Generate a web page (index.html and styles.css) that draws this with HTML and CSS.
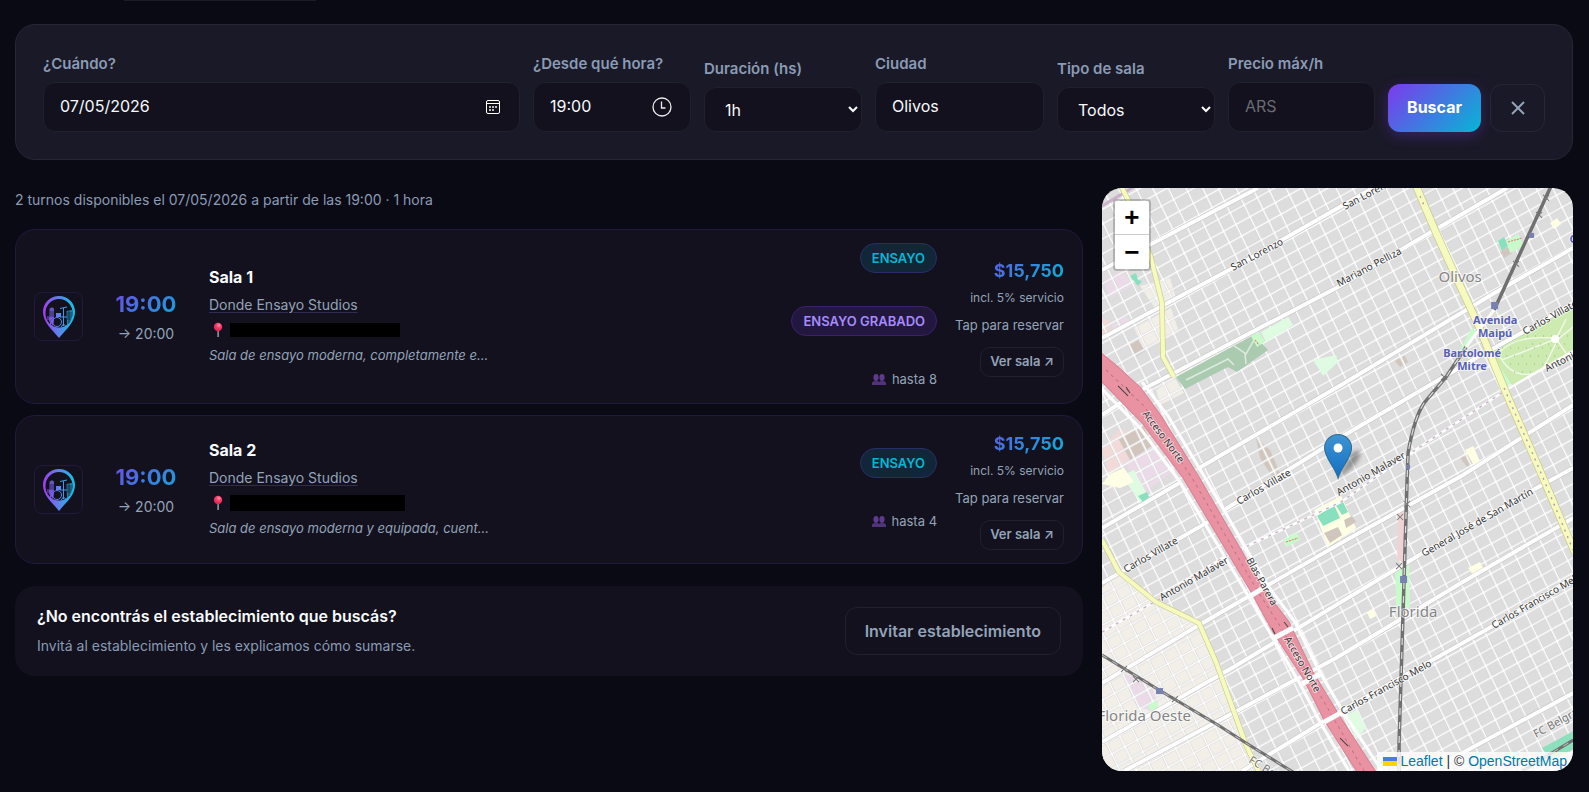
FILE: index.html
```html
<!DOCTYPE html>
<html lang="es">
<head>
  <meta charset="UTF-8">
  <meta name="viewport" content="width=device-width, initial-scale=1">
  <title>Buscar sala de ensayo</title>
  <link rel="stylesheet" href="styles.css">
</head>
<body>

  <!-- shared symbols -->
  <svg class="defs" width="0" height="0" aria-hidden="true">
    <defs>
      <linearGradient id="logoGrad" gradientUnits="userSpaceOnUse" x1="1" y1="0" x2="33" y2="0">
        <stop offset="0" stop-color="#a33cf0"/>
        <stop offset="0.5" stop-color="#5b85ea"/>
        <stop offset="1" stop-color="#10c4e6"/>
      </linearGradient>
      <radialGradient id="pinGrad" cx="0.6" cy="0.3" r="0.7">
        <stop offset="0" stop-color="#ff9ab0"/>
        <stop offset="0.4" stop-color="#f8406c"/>
        <stop offset="1" stop-color="#d81f50"/>
      </radialGradient>
      <symbol id="logo" viewBox="0 0 34 44">
        <path fill="url(#logoGrad)" fill-rule="evenodd" d="M17 1C7.800 1 1 8 1 17c0 10 8.500 17 16 26 7.500-9 16-16 16-26C33 8 26.200 1 17 1zM17 4a13.500 14 0 0 1 13.500 14A13.500 14 0 0 1 17 32.500 13.500 14 0 0 1 3.500 18 13.500 14 0 0 1 17 4z"/>
        <g fill="none" stroke="url(#logoGrad)" stroke-width="1">
          <circle cx="15" cy="27" r="4.500"/>
          <path d="M21.500 13v18M18 13.500l7-1.500M18 22h7M19 32l2.500-3 3 3M5 22h6M5 24h5M10 25l-2 5"/>
        </g>
        <g fill="url(#logoGrad)">
          <path d="M7.500 14c1-2 4-2 4.500 0v12l-1 5-4-5z" opacity="0.800"/>
          <rect x="14" y="18" width="5" height="4"/>
          <path d="M24.500 16l5.500-1v9l-5 6z" opacity="0.700"/>
        </g>
        <path d="M6 17h6M6 19h6M6 21h6M25 18h5M25 20h5M25 22h5M25 24h4M27 16v12" stroke="#12111d" stroke-width="0.600"/>
      </symbol>
      <symbol id="pin" viewBox="0 0 16 16">
        <rect x="7.400" y="7" width="1.400" height="8" fill="#a9a3b5"/>
        <circle cx="8" cy="5" r="4.200" fill="url(#pinGrad)"/>
      </symbol>
      <symbol id="people" viewBox="0 0 14 11">
        <g fill="#5d3a8c">
          <ellipse cx="4" cy="3.500" rx="2.600" ry="3.400"/>
          <ellipse cx="10" cy="3.500" rx="2.600" ry="3.400"/>
          <path d="M0 11V9q0-2 4-2 2 0 3 .7Q8 7 10 7q4 0 4 2v2z" opacity="0.850"/>
        </g>
      </symbol>
    </defs>
  </svg>

  <main class="page">
    <div class="tab-stub"></div>

    <form class="search">
      <div class="field field-date">
        <label for="fecha">¿Cuándo?</label>
        <div class="control">
          <input type="text" id="fecha" value="07/05/2026">
          <svg width="16" height="16" viewBox="0 0 16 16" fill="none" stroke="#fff">
            <rect x="1.500" y="1.500" width="13" height="13" rx="1.500"/>
            <path d="M1.500 4.500h13"/>
            <path d="M4 8h2M7 8h2M10 8h2M4 11h2M7 11h2" stroke="#bbb" stroke-width="2"/>
          </svg>
        </div>
      </div>
      <div class="field field-m">
        <label for="hora">¿Desde qué hora?</label>
        <div class="control">
          <input type="text" id="hora" value="19:00">
          <svg width="20" height="20" viewBox="0 0 20 20" fill="none" stroke="#eee" stroke-width="1.300">
            <circle cx="10" cy="10" r="9"/>
            <path d="M9.500 4.500V11H13.500"/>
          </svg>
        </div>
      </div>
      <div class="field field-m">
        <label for="duracion">Duración (hs)</label>
        <select id="duracion"><option>1h</option><option>2h</option><option>3h</option></select>
      </div>
      <div class="field field-l">
        <label for="ciudad">Ciudad</label>
        <div class="control"><input type="text" id="ciudad" value="Olivos"></div>
      </div>
      <div class="field field-m">
        <label for="tipo">Tipo de sala</label>
        <select id="tipo"><option>Todos</option><option>Ensayo</option><option>Ensayo grabado</option></select>
      </div>
      <div class="field field-s">
        <label for="precio">Precio máx/h</label>
        <div class="control"><input type="text" id="precio" placeholder="ARS"></div>
      </div>
      <div class="actions">
        <button type="submit" class="btn btn-primary">Buscar</button>
        <button type="reset" class="btn btn-clear" aria-label="Limpiar">
          <svg width="14" height="14" viewBox="0 0 14 14" stroke="currentColor" stroke-width="2"><path d="M1 1l12 12M13 1L1 13"/></svg>
        </button>
      </div>
    </form>

    <div class="results">
      <section class="list">
        <p class="summary">2 turnos disponibles el 07/05/2026 a partir de las 19:00 · 1 hora</p>

        <article class="card">
          <div class="logo"><svg width="34" height="44"><use href="#logo"/></svg></div>
          <div class="time">
            <div class="time-from">19:00</div>
            <div class="time-to">→ 20:00</div>
          </div>
          <div class="info">
            <h3>Sala 1</h3>
            <a href="#" class="venue">Donde Ensayo Studios</a>
            <div class="address"><svg width="18" height="16"><use href="#pin"/></svg><span class="redacted"></span></div>
            <p class="desc">Sala de ensayo moderna, completamente e...</p>
          </div>
          <div class="tags">
            <span class="tag tag-cyan">ENSAYO</span>
            <span class="tag tag-purple">ENSAYO GRABADO</span>
            <span class="capacity"><svg width="14" height="11"><use href="#people"/></svg>hasta 8</span>
          </div>
          <div class="price">
            <div class="amount">$15,750</div>
            <div class="fee">incl. 5% servicio</div>
            <div class="hint">Tap para reservar</div>
            <button type="button" class="btn-room">Ver sala ↗</button>
          </div>
        </article>

        <article class="card">
          <div class="logo"><svg width="34" height="44"><use href="#logo"/></svg></div>
          <div class="time">
            <div class="time-from">19:00</div>
            <div class="time-to">→ 20:00</div>
          </div>
          <div class="info">
            <h3>Sala 2</h3>
            <a href="#" class="venue">Donde Ensayo Studios</a>
            <div class="address"><svg width="18" height="16"><use href="#pin"/></svg><span class="redacted redacted-lg"></span></div>
            <p class="desc">Sala de ensayo moderna y equipada, cuent...</p>
          </div>
          <div class="tags">
            <span class="tag tag-cyan">ENSAYO</span>
            <span class="capacity"><svg width="14" height="11"><use href="#people"/></svg>hasta 4</span>
          </div>
          <div class="price">
            <div class="amount">$15,750</div>
            <div class="fee">incl. 5% servicio</div>
            <div class="hint">Tap para reservar</div>
            <button type="button" class="btn-room">Ver sala ↗</button>
          </div>
        </article>

        <div class="invite">
          <div>
            <h3>¿No encontrás el establecimiento que buscás?</h3>
            <p>Invitá al establecimiento y les explicamos cómo sumarse.</p>
          </div>
          <button type="button" class="btn-invite">Invitar establecimiento</button>
        </div>
      </section>

      <aside class="map">
        <svg class="map-canvas" viewBox="0 0 471 583" preserveAspectRatio="xMidYMid slice">
          <defs>
            <pattern id="blocks" width="45" height="39" patternUnits="userSpaceOnUse" patternTransform="translate(3 5) rotate(-29) skewX(-3)">
              <path d="M0 0H45M0 13H45M0 26H45M0 39H45M0 0V39M14 0V39M30 0V39M45 0V39" stroke="#cacaca" stroke-width="2.400"/>
              <path d="M0 0H45M0 13H45M0 26H45M0 39H45M0 0V39M14 0V39M30 0V39M45 0V39" stroke="#fff" stroke-width="1.600"/>
            </pattern>
            <linearGradient id="markerGrad" x1="0" y1="0" x2="0" y2="1">
              <stop offset="0" stop-color="#3f93cf"/>
              <stop offset="1" stop-color="#126fc6"/>
            </linearGradient>
            <filter id="soft"><feGaussianBlur stdDeviation="2"/></filter>
          </defs>

          <rect width="471" height="583" fill="#dddddd"/>
          <path fill="#f2efe9" d="M0 400L17 384 54 414 97 435 114 474 144 557 157 583H0z"/>
          <path fill="#f2efe9" d="M38 98l30-8 6 20-20 12zM32 140l37-20 8 24-35 18zM54 202l18-13 10 16-24 12z"/>
          <path fill="#ebdbe8" d="M2 92l20-12 8 18-22 12zM20 268l30-14 20 30-30 22zM10 135l14-8 6 12-18 8zM20 485l28 8 8 22-8 8-14-6z"/>
          <path fill="#f2dad9" d="M0 262l18-22 16 6-22 60zM0 130l10 4-4 14H0z"/>
          <path fill="#d1c6bd" d="M26 158l10-6 7 11-10 6zM16 250l26-12 8 20-22 14zM154 250l14 12 12 28-6 4-16-24zM292 172l9-7 5 9-8 5zM358 270l12-5 8 12-10 6z"/>

          <!-- street grid -->
          <rect width="471" height="583" fill="url(#blocks)"/>

          <!-- parks, schools, pitches -->
          <path fill="#aacbaf" d="M74 189l78-42 14 15-31 22-9-5-43 22z"/>
          <path d="M84 192l42-21 6 6M132 158l12 8 8-14M143 166l1 10" fill="none" stroke="#dcebdd" stroke-width="1.500"/>
          <path fill="#dffce2" d="M159 144l27-15 5 8-27 17zM211 172l23-5 2 7-15 14zM243 527l12-5 9 18-10 11zM20 288l12-6 14 26-8 6z"/>
          <path fill="#c8facc" d="M149 148l8-4 6 10-8 5zM357 163l13-23 5 4-12 20zM393 172l6-2 14 23-7 5z"/>
          <path fill="#cdebb0" d="M391 159l31-16 49-24v44l-60 36-16-25z"/>
          <path d="M396 165q20-20 60-14l15-12M396 165q14 30 44 18l16-32M400 172l54-21 14 20M454 151l10-20" fill="none" stroke="#f3f8ec" stroke-width="1.400"/>
          <path d="M400 160h60M404 168h60M408 176h48M412 184h30M425 148h45M430 156h40" stroke="#8cba6c" stroke-dasharray="1 7"/>
          <circle cx="453" cy="151" r="4" fill="#fff"/>
          <path fill="#ffffe5" d="M212 322l27-14 15 32-28 19zM0 296l8-10 14-6 10 14-14 6zM448 35l7-5 4 6-7 5zM265 425l6-5 3 8-6 3zM363 262l8-4 7 16-6 4zM366 380l12-6 4 8-10 6z"/>
          <path fill="#88e0be" d="M215 328l17-11 6 13-17 8zM233 316l7-4 6 12-6 3zM28 88l6-3 2 7 4 1-4 5zM36 308l9-4 2 5-6 5zM396 53l6-4 4 9-6 5zM294 402l5-2 1 15-5 1z"/>
          <path fill="#d1c6bd" d="M222 345l14-6 4 8-12 8zM398 64l8-5 4 6-8 5zM242 332l8-4 4 6-10 6z"/>
          <path fill="#c8facc" d="M404 53l12-7 6 12-14 7zM181 352l14-8 3 8-14 7zM46 518l8-6 3 8-8 3zM293 382l14-8 1 46-14-2z"/>
          <path fill="#f2d3d3" d="M296 322l6-2-1 54-6-2z"/>
          <path d="M184 354l12-4M406 54l14-4M153 152l4 5" stroke="#e8706c" stroke-dasharray="2 1"/>
          <path fill="#8ce0bc" d="M440 560l31-17v18l-22 12z"/>

          <!-- secondary streets -->
          <g fill="none" stroke="#c4c4c4" stroke-width="5">
            <path id="main" d="M0 82L156 0M0 150L131 80 236 20 271 0M0 227L34 205 236 99 329 44 405 0M97 280L239 197 394 104 471 60M0 340L79 294M122 322L234 252 374 170 421 144 471 115M0 395L106 334M0 495L97 437 239 355 361 287 471 217M0 554L130 480 239 414 319 366 431 302 471 280M22 583L234 470 359 395 471 330M140 583L237 524 334 470 389 439 471 390M330 583L351 570 471 505"/>
          </g>
          <path fill="none" stroke="#fff" stroke-width="4" d="M0 82L156 0M0 150L131 80 236 20 271 0M0 227L34 205 236 99 329 44 405 0M97 280L239 197 394 104 471 60M0 340L79 294M122 322L234 252 374 170 421 144 471 115M0 395L106 334M0 495L97 437 239 355 361 287 471 217M0 554L130 480 239 414 319 366 431 302 471 280M22 583L234 470 359 395 471 330M140 583L237 524 334 470 389 439 471 390M330 583L351 570 471 505"/>
          <path d="M0 444L59 410 120 370 239 314 304 268 404 202 471 163" fill="none" stroke="#fff" stroke-width="2.500"/>
          <path d="M0 444L59 410 120 370 239 314 304 268 404 202" fill="none" stroke="#c9b3cb" stroke-width="1.500" stroke-dasharray="3 5"/>
          <path d="M0 18L40 -6" stroke="#c9b3cb" stroke-width="3"/>

          <!-- motorway -->
          <path fill="none" stroke="#fff" stroke-width="3" d="M0 201L38 240 78 294 145 406 198 496 219 536 247 583M40 194L66 228 102 288 166 398 193 434 217 483 243 527 280 583"/>
          <path fill="#e892a2" stroke="#dc7f92" d="M-2 164L15 178 39 200 60 229 97 289 161 400 187 434 211 484 237 527 274 584H255L222 532 202 492 171 444 149 404 81 290 40 235-2 192z"/>
          <path fill="none" stroke="#b8768c" stroke-dasharray="3 4" d="M4 182L42 218 90 290 155 402 178 438 207 488 262 583"/>
          <path stroke="#fff" stroke-width="5" d="M148 408L166 397M172 450L191 440M200 496L218 486M222 534L240 524"/>
          <path d="M16 198l10 10M24 199l4 6M170 440l3 6M182 434l4 5M238 550l8 8" stroke="#444"/>

          <!-- avenues -->
          <path d="M314 -2L334 45 354 89 377 139 404 205 441 290 473 365" fill="none" stroke="#c9cb8e" stroke-width="8"/>
          <path d="M314 -2L334 45 354 89 377 139 404 205 441 290 473 365" fill="none" stroke="#f7fabf" stroke-width="6.500"/>
          <path d="M402 200L441 290 471 362M318 8l5 12" fill="none" stroke="#b7a0a8" stroke-width="1.500" stroke-dasharray="2 5"/>
          <path d="M19 -2L26 12 49 70 60 115 61 169 72 189M0 352L17 384 54 414 97 435 114 474 144 557 157 584" fill="none" stroke="#c9cb8e" stroke-width="5.500"/>
          <path d="M19 -2L26 12 49 70 60 115 61 169 72 189M0 352L17 384 54 414 97 435 114 474 144 557 157 584" fill="none" stroke="#f7fabf" stroke-width="4.200"/>

          <!-- railways -->
          <g fill="none">
            <path d="M449 -2L392 122M364 159L344 189 322 215Q312 230 306 265L305 292 302 391 297 554V583" stroke="#707070" stroke-width="3.500"/>
            <path d="M392 122L364 159" stroke="#fff" stroke-width="3"/>
            <path d="M364 159L344 189 322 215Q312 230 306 265L305 292 302 391 297 554V583" stroke="#ddd" stroke-width="1.200" stroke-dasharray="7 7"/>
            <path d="M0 467L57 502 116 537 144 555 191 584M420 583L471 552" stroke="#707070" stroke-width="3"/>
            <path d="M0 467L57 502 116 537 144 555 191 584M420 583L471 552" stroke="#bbb" stroke-dasharray="6 6"/>
            <path d="M441 7l6 6M447 7l-6 6M434 24l6 6M440 24l-6 6M411 73l6 6M417 73l-6 6M339 186l6 6M345 186l-6 6M302 313l6 6M308 313l-6 6M295 326l6 6M301 326l-6 6M294 375l6 6M300 375l-6 6M19 478l6 6M25 478l-6 6M31 488l6 6M37 488l-6 6M70 508l6 6M76 508l-6 6" stroke="#777"/>
          </g>
          <g fill="#7981b0">
            <rect x="389" y="114" width="7" height="7"/><rect x="427" y="45" width="5" height="5"/>
            <rect x="304" y="277" width="4" height="4"/><rect x="298" y="388" width="7" height="7"/>
            <rect x="54" y="500" width="7" height="6"/>
          </g>

          <!-- labels -->
          <g class="street">
            <text transform="translate(131 83) rotate(-28)">San Lorenzo</text>
            <text transform="translate(243 22) rotate(-28)">San Lorenzo</text>
            <text transform="translate(237 99) rotate(-28)">Mariano Pelliza</text>
            <text transform="translate(423 147) rotate(-29)">Carlos Villate</text>
            <text transform="translate(445 184) rotate(-27)">Antonio Malaver</text>
            <text transform="translate(237 308) rotate(-30)">Antonio Malaver</text>
            <text transform="translate(137 317) rotate(-30)">Carlos Villate</text>
            <text transform="translate(24 385) rotate(-30)">Carlos Villate</text>
            <text transform="translate(60 413) rotate(-30)">Antonio Malaver</text>
            <text transform="translate(40 226) rotate(53)">Acceso Norte</text>
            <text transform="translate(144 372) rotate(61)">Blas Parera</text>
            <text transform="translate(182 451) rotate(60)">Acceso Norte</text>
            <text transform="translate(322 369) rotate(-30)">General José de San Martín</text>
            <text transform="translate(392 441) rotate(-30)">Carlos Francisco Melo</text>
            <text transform="translate(241 527) rotate(-29)">Carlos Francisco Melo</text>
          </g>
          <g class="rail-name">
            <text transform="translate(434 550) rotate(-29)">FC Belgrano</text>
            <text transform="translate(146 574) rotate(32)">FC Belgrano</text>
          </g>
          <g class="place">
            <text x="358" y="94" text-anchor="middle">Olivos</text>
            <text x="311" y="429" text-anchor="middle">Florida</text>
            <text x="89" y="533" text-anchor="end">Florida Oeste</text>
          </g>
          <g class="station" text-anchor="middle">
            <text x="393" y="136">Avenida</text><text x="393" y="149">Maipú</text>
            <text x="370" y="169">Bartolomé</text><text x="370" y="182">Mitre</text>
            <text x="471" y="55">C</text>
          </g>

          <!-- marker -->
          <path d="M236 289l14-24q8-6 8 2-2 10-20 22z" fill="#000" opacity="0.350" filter="url(#soft)"/>
          <path d="M236 290c-3-11-13.500-20-13.500-30a13.500 13.500 0 0 1 27 0c0 10-10.500 19-13.500 30z" fill="url(#markerGrad)" stroke="#2e6c97"/>
          <circle cx="236" cy="260" r="4.500" fill="#fff"/>
        </svg>

        <div class="zoom">
          <button type="button" aria-label="Acercar">+</button>
          <button type="button" aria-label="Alejar">−</button>
        </div>
        <div class="attribution">
          <svg width="14" height="9" viewBox="0 0 14 9"><path fill="#4c7be1" d="M0 0h14v5H0z"/><path fill="#ffd500" d="M0 4h14v5H0z"/></svg>
          <a href="#">Leaflet</a> | © <a href="#">OpenStreetMap</a>
        </div>
      </aside>
    </div>
  </main>

</body>
</html>
```

FILE: styles.css
```css
* {
  box-sizing: border-box;
}
body {
  margin: 0;
  background-color: #0a0a14;
  color: #f8fafc;
  font-family: Inter, sans-serif;
  font-size: 14px;
}
h3, p {
  margin: 0;
}
button, input, select {
  font-family: inherit;
}
button {
  cursor: pointer;
}
.defs {
  position: absolute;
}
.page {
  padding: 0 16px 20px 15px;
}
.tab-stub {
  width: 192px;
  height: 1px;
  margin-left: 109px;
  background-color: #1c1b29;
}

/* search bar */
.search {
  display: flex;
  align-items: flex-end;
  gap: 13px;
  margin-top: 23px;
  padding: 27px;
  background-color: #1a1927;
  border: 1px solid #272634;
  border-radius: 20px;
}
.field {
  display: flex;
  flex-direction: column;
}
.field-date {
  flex: 1;
}
.field-s {
  width: 147px;
}
.field-m {
  width: 158px;
}
.field-l {
  width: 169px;
}
.field label {
  margin-bottom: 6px;
  color: #8a9bb4;
  font-size: 15px;
  font-weight: 600;
  line-height: 24px;
}
.control {
  display: flex;
  align-items: center;
  height: 50px;
  padding: 0 18px 0 16px;
}
.control, .field select {
  background-color: #12111d;
  border: 1px solid #21202d;
  border-radius: 12px;
}
.control input {
  flex: 1;
  min-width: 0;
  padding: 0 0 2px;
  background: none;
  border: none;
  outline: none;
  color: #f8fafc;
  font-size: 16px;
}
.control input::placeholder {
  color: #6b6b73;
}
.field select {
  height: 45px;
  padding: 0 0 0 16px;
  color: #f8fafc;
  font-size: 16px;
}
.actions {
  display: flex;
  gap: 9px;
}
.btn {
  height: 48px;
  border-radius: 12px;
}
.btn-primary {
  width: 93px;
  padding: 0 0 2px;
  border: none;
  color: #fff;
  font-size: 16px;
  font-weight: 700;
  background: linear-gradient(135deg, #7c3aed, #06b6d4);
  box-shadow: 0 4px 14px rgba(124, 58, 237, 0.3);
}
.btn-clear {
  display: flex;
  align-items: center;
  justify-content: center;
  width: 55px;
  background: none;
  border: 1px solid #272634;
  color: #94a3b8;
}

/* results */
.results {
  display: grid;
  grid-template-columns: 34fr 15fr;
  gap: 19px;
  margin-top: 28px;
}
.summary {
  margin-bottom: 18px;
  color: #8a9bb4;
  line-height: 23px;
}
.card {
  display: flex;
  align-items: center;
  margin-bottom: 11px;
  padding: 13px 18px;
  background-color: #12111d;
  border: 1px solid #21193e;
  border-radius: 20px;
}
.logo {
  display: flex;
  align-items: center;
  justify-content: center;
  width: 49px;
  height: 49px;
  border: 1px solid #21193e;
  border-radius: 8px;
}
.time {
  width: 90px;
  margin: 0 18px;
  text-align: center;
}
.time-from {
  background: linear-gradient(135deg, #7c3aed, #06b6d4);
  background-clip: text;
  color: transparent;
  font-size: 22px;
  font-weight: 700;
  line-height: 34px;
}
.time-to {
  color: #94a3b8;
  line-height: 26px;
}
.info {
  flex: 1;
  min-width: 0;
  line-height: 27px;
}
.info h3 {
  font-size: 16px;
  font-weight: 700;
}
.venue {
  color: #94a3b8;
  text-decoration: underline #302a55;
  text-underline-offset: 2px;
}
.address {
  display: flex;
  align-items: center;
  gap: 3px;
  height: 24px;
}
.redacted {
  width: 170px;
  height: 14px;
  background-color: #000;
}
.redacted-lg {
  width: 175px;
  height: 16px;
}
.desc {
  color: #94a3b8;
  font-size: 13px;
  font-style: italic;
}
.tags {
  display: flex;
  flex-direction: column;
  align-items: flex-end;
  gap: 33px;
  margin-right: 18px;
}
.tag {
  padding: 0 11px;
  border: 1px solid;
  border-radius: 15px;
  font-size: 13px;
  font-weight: 600;
  line-height: 28px;
}
.tag-cyan {
  background-color: #112737;
  border-color: #2b2d69;
  color: #06b6d4;
}
.tag-purple {
  background-color: #22173f;
  border-color: #3d2170;
  color: #a78bfa;
}
.capacity {
  display: flex;
  align-items: center;
  gap: 6px;
  color: #94a3b8;
  font-size: 13px;
  line-height: 21px;
}
.price {
  display: flex;
  flex-direction: column;
  align-items: flex-end;
  color: #94a3b8;
  font-size: 13px;
}
.amount {
  align-self: stretch;
  text-align: right;
  background: linear-gradient(135deg, #7c3aed, #06b6d4);
  background-clip: text;
  color: transparent;
  font-size: 18px;
  font-weight: 700;
  line-height: 30px;
}
.fee {
  font-size: 12px;
  line-height: 24px;
}
.hint {
  line-height: 30px;
}
.btn-room {
  height: 30px;
  margin-top: 7px;
  padding: 0 9px 2px;
  background: none;
  border: 1px solid #21202d;
  border-radius: 10px;
  color: #94a3b8;
  font-size: 13px;
  font-weight: 600;
}
.invite {
  display: flex;
  align-items: center;
  justify-content: space-between;
  margin-top: 22px;
  padding: 16px 22px;
  background-color: #12111d;
  border-radius: 20px;
}
.invite h3 {
  font-size: 16px;
  font-weight: 600;
  line-height: 29px;
}
.invite p {
  color: #8a9bb4;
  line-height: 29px;
}
.btn-invite {
  height: 48px;
  padding: 0 19px;
  background: none;
  border: 1px solid #21202d;
  border-radius: 12px;
  color: #94a3b8;
  font-size: 16px;
  font-weight: 600;
}

/* map */
.map {
  position: relative;
  height: 583px;
  overflow: hidden;
  border-radius: 20px;
}
.map-canvas {
  display: block;
  width: 100%;
  height: 100%;
}
.street text, .place text, .station text, .rail-name text {
  font-family: "Noto Sans", sans-serif;
  paint-order: stroke;
  stroke: rgba(255, 255, 255, 0.6);
  stroke-width: 2px;
}
.street text {
  font-size: 10px;
  fill: #333;
}
.rail-name text {
  font-size: 11px;
  fill: #777;
}
.place text {
  font-size: 15px;
  fill: #858585;
}
.station text {
  font-size: 11px;
  font-weight: 700;
  fill: #5560b5;
}
.zoom {
  position: absolute;
  top: 11px;
  left: 11px;
  display: flex;
  flex-direction: column;
  border: 2px solid rgba(0, 0, 0, 0.2);
  border-radius: 4px;
  background-clip: padding-box;
}
.zoom button {
  width: 34px;
  height: 34px;
  padding: 0;
  background-color: #fff;
  border: none;
  color: #000;
  font: bold 26px "Liberation Sans", Arial, sans-serif;
}
.zoom button:first-child {
  border-bottom: 1px solid #ccc;
  border-radius: 2px 2px 0 0;
}
.zoom button:last-child {
  border-radius: 0 0 2px 2px;
}
.attribution {
  position: absolute;
  right: 0;
  bottom: 0;
  padding: 0 6px;
  background-color: rgba(255, 255, 255, 0.8);
  color: #333;
  font: 14px/19px "Liberation Sans", Arial, sans-serif;
}
.attribution a {
  color: #0078a8;
  text-decoration: none;
}
```
